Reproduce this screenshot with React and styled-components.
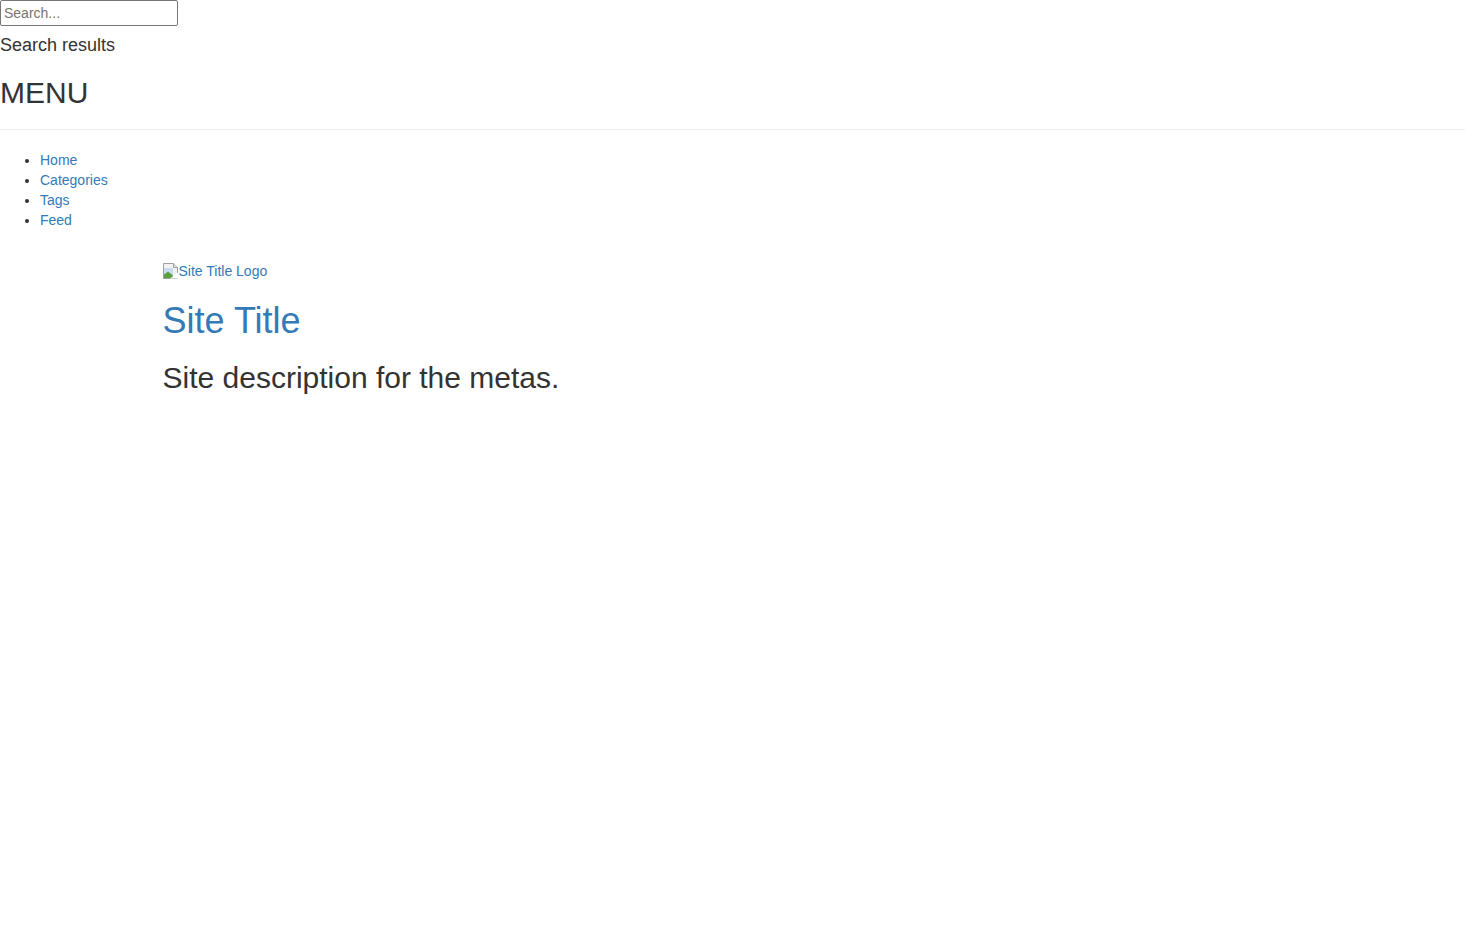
import React from 'react';
import styled, { createGlobalStyle } from 'styled-components';

const GlobalStyle = createGlobalStyle`
    html, body {
        margin: 0;
        padding: 0;
        background: #fff;
    }
    body {
        font-family: "Liberation Sans", Arial, Helvetica, sans-serif;
        font-size: 14px;
        line-height: 1.42857;
        color: #333;
    }
    a {
        color: #337ab7;
        text-decoration: none;
    }
`

const App = () => {
    return (
        <RootWrapper>
            <GlobalStyle />
            <SearchBox>
                <SearchInput type="text" placeholder="Search..." />
                <ResultsLabel>Search results</ResultsLabel>
            </SearchBox>

            <MenuTitle>MENU</MenuTitle>
            <Divider />

            <NavList>
                <li><a href="#">Home</a></li>
                <li><a href="#">Categories</a></li>
                <li><a href="#">Tags</a></li>
                <li><a href="#">Feed</a></li>
            </NavList>

            <Container>
                <LogoLink href="#">
                    <BrokenImage />
                    Site Title Logo
                </LogoLink>
                <SiteTitle><a href="#">Site Title</a></SiteTitle>
                <SiteDescription>Site description for the metas.</SiteDescription>
            </Container>
        </RootWrapper>
    )
}

// browser's broken image placeholder
const BrokenImage = () => (
    <svg width="16" height="16" viewBox="0 0 16 16" style={{ flex: 'none' }}>
        <path d="M0.5 0.5h10l4 4v11h-14z" fill="#f2f2f2" stroke="#a0a0a0" />
        <path d="M10.5 0.5v4h4" fill="#e0e0e0" stroke="#a0a0a0" />
        <path d="M1 5h9v7H1z" fill="#c7dcef" />
        <path d="M1 15v-3.5l4-3 5 4v2.5z" fill="#5aa040" />
        <path d="M7 15.5l8-6v6z" fill="#ffffff" />
    </svg>
)

const RootWrapper = styled.div`
    width: 100%;
    min-height: 930px;
`

const SearchBox = styled.div`
    display: flex;
    flex-direction: column;
    align-items: flex-start;
`

const SearchInput = styled.input`
    box-sizing: border-box;
    width: 178px;
    height: 26px;
    margin: 0;
    padding: 1px 3px;
    border: 1px solid #767676;
    border-radius: 2px;
    font-family: "Liberation Sans", Arial, sans-serif;
    font-size: 14px;
    color: #333;
    &::placeholder {
        color: #757575;
    }
`

const ResultsLabel = styled.div`
    margin-top: 9px;
    font-size: 18px;
    line-height: 20px;
`

const MenuTitle = styled.h2`
    margin: 21px 0 0;
    font-size: 30px;
    font-weight: 400;
    line-height: 33px;
    color: #333;
`

const Divider = styled.hr`
    margin: 20px 0;
    border: 0;
    border-top: 1px solid #eee;
`

const NavList = styled.ul`
    margin: 0;
    padding-left: 40px;
    list-style: disc;
    font-size: 14px;
    line-height: 20px;
`

const Container = styled.div`
    width: 1170px;
    box-sizing: border-box;
    margin: 31px auto 0;
    padding: 0 15px;
`

const LogoLink = styled.a`
    display: inline-flex;
    align-items: center;
    font-size: 14px;
    line-height: 20px;
`

const SiteTitle = styled.h1`
    margin: 16px 0 0;
    font-size: 36px;
    font-weight: 400;
    line-height: 40px;
`

const SiteDescription = styled.p`
    margin: 20px 0 0;
    font-size: 30px;
    line-height: 33px;
`

export default App;
